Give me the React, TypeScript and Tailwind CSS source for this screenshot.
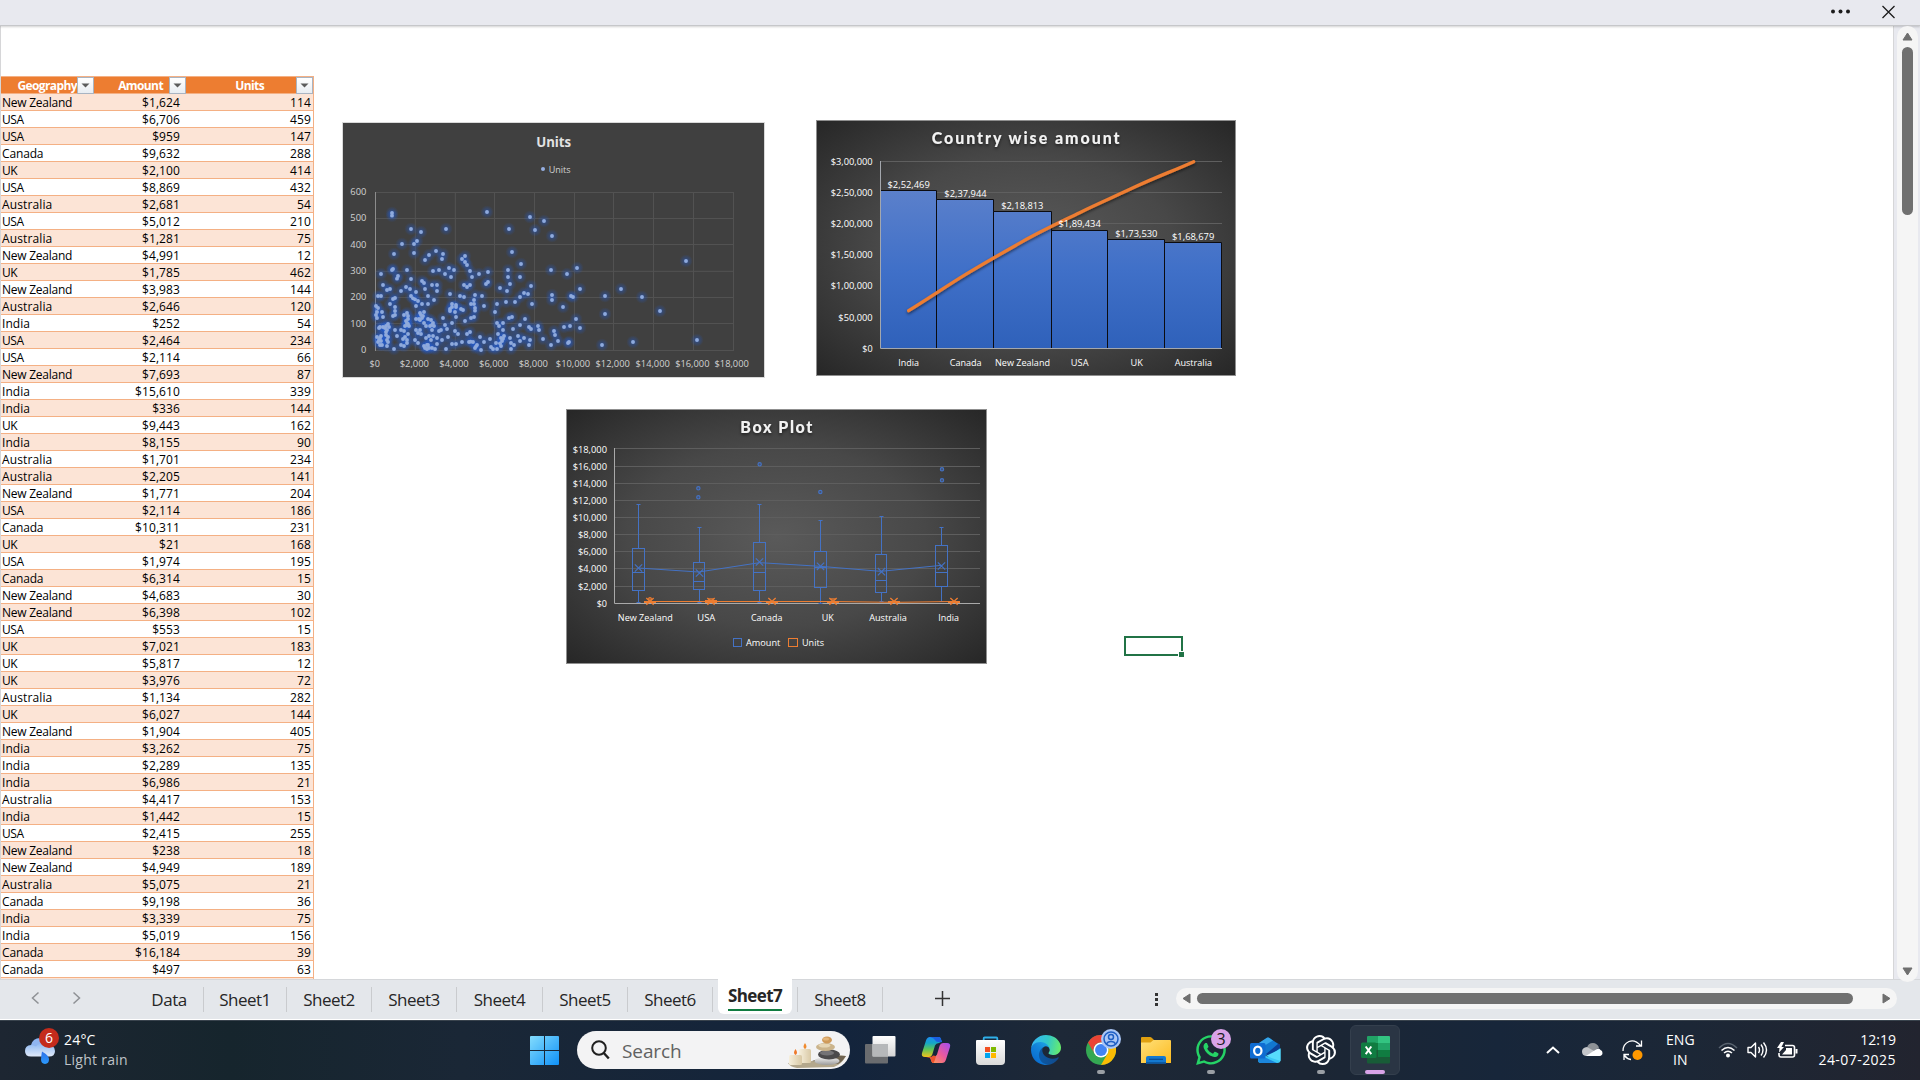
import React from "react";
import { SiOpenai } from "react-icons/si";
import { FaWhatsapp } from "react-icons/fa";

const ROWS: [string, string, number][] = [
  ["New Zealand", "$1,624", 114], ["USA", "$6,706", 459], ["USA", "$959", 147], ["Canada", "$9,632", 288],
  ["UK", "$2,100", 414], ["USA", "$8,869", 432], ["Australia", "$2,681", 54], ["USA", "$5,012", 210],
  ["Australia", "$1,281", 75], ["New Zealand", "$4,991", 12], ["UK", "$1,785", 462], ["New Zealand", "$3,983", 144],
  ["Australia", "$2,646", 120], ["India", "$252", 54], ["USA", "$2,464", 234], ["USA", "$2,114", 66],
  ["New Zealand", "$7,693", 87], ["India", "$15,610", 339], ["India", "$336", 144], ["UK", "$9,443", 162],
  ["India", "$8,155", 90], ["Australia", "$1,701", 234], ["Australia", "$2,205", 141], ["New Zealand", "$1,771", 204],
  ["USA", "$2,114", 186], ["Canada", "$10,311", 231], ["UK", "$21", 168], ["USA", "$1,974", 195],
  ["Canada", "$6,314", 15], ["New Zealand", "$4,683", 30], ["New Zealand", "$6,398", 102], ["USA", "$553", 15],
  ["UK", "$7,021", 183], ["UK", "$5,817", 12], ["UK", "$3,976", 72], ["Australia", "$1,134", 282],
  ["UK", "$6,027", 144], ["New Zealand", "$1,904", 405], ["India", "$3,262", 75], ["India", "$2,289", 135],
  ["India", "$6,986", 21], ["Australia", "$4,417", 153], ["India", "$1,442", 15], ["USA", "$2,415", 255],
  ["New Zealand", "$238", 18], ["New Zealand", "$4,949", 189], ["Australia", "$5,075", 21], ["Canada", "$9,198", 36],
  ["India", "$3,339", 75], ["India", "$5,019", 156], ["Canada", "$16,184", 39], ["Canada", "$497", 63],
];

const TRACKING: Record<string, string> = {
  "New Zealand": "tracking-[-0.25px]",
  Australia: "tracking-[0.12px]",
  India: "tracking-[0.05px]",
  Canada: "tracking-[-0.15px]",
  USA: "tracking-[-0.45px]",
  UK: "tracking-[-0.4px]",
};

// Scatter markers, three drawing units per pixel.
const POINTS: number[][] = [
  [66,69],[66,77],[351,66],[480,81],[522,93],[495,120],[546,138],[417,117],[228,117],[123,117],[153,126],[141,153],[132,162],[96,162],[132,189],[72,192],
  [177,195],[198,183],[219,192],[216,207],[165,210],[285,198],[276,207],[285,216],[291,225],[300,243],[237,234],[252,240],[225,252],[243,261],[189,243],
  [207,240],[111,240],[66,240],[69,237],[33,252],[84,258],[81,266],[123,267],[156,273],[162,279],[39,285],[51,300],[60,297],[108,291],[120,297],[93,303],
  [138,306],[165,297],[186,285],[201,285],[201,303],[240,312],[282,285],[291,291],[300,285],[306,261],[327,252],[354,246],[354,276],[348,282],[426,186],
  [453,222],[414,240],[414,261],[450,261],[420,282],[390,294],[411,303],[483,288],[543,240],[591,252],[621,234],[630,297],[462,309],[474,312],[450,321],
  [435,336],[408,336],[486,342],[546,315],[546,330],[603,318],[609,321],[579,351],[381,342],[375,366],[342,348],[336,318],[270,318],[282,321],[315,315],
  [312,330],[312,342],[303,342],[192,330],[174,318],[174,342],[156,342],[138,348],[144,333],[123,318],[129,325],[135,328],[60,342],[75,324],[69,327],
  [75,351],[75,363],[24,318],[33,318],[18,348],[24,354],[21,366],[36,366],[18,375],[39,381],[21,384],[75,375],[69,378],[246,342],[258,345],[258,351],
  [246,351],[240,357],[240,363],[255,366],[273,357],[279,360],[315,354],[315,362],[312,381],[303,384],[285,393],[258,381],[219,384],[246,399],[225,405],
  [417,384],[426,381],[465,387],[618,387],[630,414],[600,408],[582,411],[504,408],[507,420],[477,411],[483,417],[450,405],[429,417],[381,399],[399,399],
  [387,408],[399,420],[552,423],[555,435],[564,453],[597,456],[594,459],[543,465],[519,447],[480,450],[477,465],[462,444],[444,438],[450,453],[420,444],
  [423,459],[432,465],[423,477],[384,432],[402,438],[393,444],[399,446],[396,453],[378,459],[393,468],[363,471],[369,477],[381,477],[390,460],[333,480],[321,465],[315,474],
  [309,456],[302,455],[297,456],[318,469],[291,432],[300,426],[330,441],[342,456],[360,447],[276,456],[264,432],[255,423],[258,462],[246,462],[234,441],[216,450],
  [228,477],[201,462],[201,444],[189,438],[207,423],[213,420],[231,417],[30,411],[39,411],[48,408],[54,402],[57,411],[45,414],[51,420],[48,426],[27,414],
  [75,420],[93,420],[102,423],[105,408],[111,399],[117,408],[111,369],[102,375],[114,378],[114,387],[108,393],[114,402],[111,405],[81,438],[114,432],
  [105,441],[111,450],[111,459],[102,468],[93,465],[99,447],[21,441],[30,444],[33,438],[27,450],[24,456],[48,435],[54,441],[51,450],[54,456],[30,465],
  [36,465],[51,468],[72,477],[33,453],[150,369],[153,375],[162,366],[138,387],[147,387],[156,384],[150,390],[159,378],[162,399],[168,408],[174,387],
  [183,390],[189,399],[186,405],[192,408],[180,408],[138,420],[150,420],[144,429],[153,432],[135,450],[144,459],[168,444],[177,438],[183,450],[186,420],
  [162,468],[171,465],[165,474],[177,474],[186,474],[195,477],[171,477],[174,465],[948,213],[753,297],[705,318],[816,321],[870,363],[705,372],[696,465],
  [789,456],[981,450],
];

function Label({ x, y, w, children, fill = "#ffffff", size = 29.5, anchor = "middle" }: {
  x: number; y: number; w: number; children: string; fill?: string; size?: number; anchor?: "start" | "middle" | "end";
}) {
  return (
    <text x={x} y={y} textAnchor={anchor} textLength={w} lengthAdjust="spacingAndGlyphs" fontSize={size} fill={fill} fontFamily="'Open Sans', sans-serif">
      {children}
    </text>
  );
}

function ScatterChart() {
  const xs = ["$0", "$2,000", "$4,000", "$6,000", "$8,000", "$10,000", "$12,000", "$14,000", "$16,000", "$18,000"];
  const xc = [104, 223, 342, 461, 580, 699, 818, 938, 1057, 1175];
  const vx = [226, 346, 463.5, 583.5, 703.5, 820.5, 940.5, 1060.5, 1180.5];
  const hy = [232.5, 310.5, 388.5, 469, 547.5, 625.5];
  return (
    <svg viewBox="6 21 1269 768" className="block h-full w-full">
      <defs>
        <radialGradient id="glow">
          <stop offset="0" stopColor="#1f5fe0" stopOpacity=".6" />
          <stop offset=".4" stopColor="#1f5fe0" stopOpacity=".3" />
          <stop offset="1" stopColor="#1f5fe0" stopOpacity="0" />
        </radialGradient>
      </defs>
      <rect x="6" y="21" width="1269" height="768" fill="#d9d9d9" />
      <rect x="9" y="24" width="1263" height="762" fill="#404040" />
      <g stroke="#525252" strokeWidth="3">
        {hy.map((y) => <line key={y} x1="105" x2="1182" y1={y} y2={y} />)}
        <line x1="105" x2="1182" y1="706.5" y2="706.5" />
        {vx.map((x) => <line key={x} x1={x} x2={x} y1="231" y2="708" />)}
        <line x1="106.5" x2="106.5" y1="231" y2="708" stroke="#8c8c8c" />
      </g>
      <g transform="translate(90 225)">
        {POINTS.map(([x, y], i) => <circle key={i} cx={x} cy={y} r="20" fill="url(#glow)" />)}
        {POINTS.map(([x, y], i) => <circle key={i} cx={x} cy={y} r="5.8" fill="#8faadc" />)}
      </g>
      <text x="641" y="96" textAnchor="middle" textLength="105" lengthAdjust="spacingAndGlyphs" fontSize="42" fontWeight="700" fill="#e2e2e2" fontFamily="'Open Sans', sans-serif">Units</text>
      <circle cx="609" cy="162" r="6" fill="#96afe2" />
      <Label x={626} y={173} w={66} anchor="start" fill="#d2d2d2">Units</Label>
      {["600", "500", "400", "300", "200", "100"].map((t, i) => (
        <Label key={t} x={79} y={240 + i * 79} w={48} anchor="end" fill="#d2d2d2">{t}</Label>
      ))}
      <Label x={79} y={714} w={16} anchor="end" fill="#d2d2d2">0</Label>
      {xs.map((t, i) => (
        <Label key={t} x={xc[i]} y={755} w={i === 0 ? 31 : i < 5 ? 88 : 103} fill="#d2d2d2">{t}</Label>
      ))}
    </svg>
  );
}

function DarkFrame({ id, w, h }: { id: string; w: number; h: number }) {
  return (
    <>
      <defs>
        <radialGradient id={id} cx=".5" cy=".5" r=".71">
          <stop offset="0" stopColor="#5a5a5a" />
          <stop offset=".5" stopColor="#484848" />
          <stop offset="1" stopColor="#262626" />
        </radialGradient>
        <filter id={id + "-shadow"} x="-10%" y="-10%" width="120%" height="140%">
          <feDropShadow dx="0" dy="5" stdDeviation="4" floodColor="#000" floodOpacity=".55" />
        </filter>
      </defs>
      <rect x="1.5" y="1.5" width={w - 3} height={h - 3} fill={`url(#${id})`} stroke="#8f8f8f" strokeWidth="3" />
    </>
  );
}

function ParetoChart() {
  const edges = [211.5, 379.5, 550.5, 724.5, 892.5, 1063.5, 1234.5];
  const tops = [226.5, 253.5, 289.5, 346.5, 373.5, 382.5];
  const cats: [string, number, number][] = [["India", 296, 62], ["Canada", 467, 96], ["New Zealand", 637.5, 165], ["USA", 809, 53], ["UK", 980, 37], ["Australia", 1150, 112]];
  const vals: [string, number, number][] = [["$2,52,469", 296, 219], ["$2,37,944", 466.5, 246], ["$2,18,813", 637, 282], ["$1,89,434", 809, 336], ["$1,73,530", 979, 366], ["$1,68,679", 1149.5, 375]];
  const axis: [string, number, number][] = [["$3,00,000", 150, 126], ["$2,50,000", 243, 126], ["$2,00,000", 336, 126], ["$1,50,000", 429, 126], ["$1,00,000", 522, 126], ["$50,000", 618, 103], ["$0", 711, 31]];
  return (
    <svg viewBox="18 15 1260 768" className="block h-full w-full">
      <g transform="translate(18 15)"><DarkFrame id="pareto" w={1260} h={768} /></g>
      <defs>
        <linearGradient id="bar" x1="0" x2="0" y1="226" y2="700" gradientUnits="userSpaceOnUse">
          <stop offset="0" stopColor="#5b80cb" />
          <stop offset=".5" stopColor="#4070c8" />
          <stop offset="1" stopColor="#2f61ba" />
        </linearGradient>
      </defs>
      {[139.5, 232.5, 325.5].map((y) => <line key={y} x1="212" x2="1236" y1={y} y2={y} stroke="#5f5f5f" strokeWidth="3" />)}
      {tops.map((t, i) => (
        <path key={t} d={`M${edges[i]} 700V${t}H${edges[i + 1]}V700`} fill="url(#bar)" stroke="#0c0c10" strokeWidth="3" />
      ))}
      <path d="M211.5 138V700.5H1236" fill="none" stroke="#a3a7ad" strokeWidth="3" />
      <path d="M296 587C352 553 410 513 466 479S580 412 637 380S752 321 809 293S922 241 979 214S1094 166 1151 140" fill="none" stroke="#ed7d31" strokeWidth="10" strokeLinecap="round" filter="url(#pareto-shadow)" />
      <text x="647" y="88" textAnchor="middle" textLength="564" fontSize="48" fontWeight="900" fill="#f2f2f2" fontFamily="Lato, sans-serif" filter="url(#pareto-shadow)">Country wise amount</text>
      {axis.map(([t, y, w]) => <Label key={t} x={188} y={y} w={w} anchor="end">{t}</Label>)}
      {vals.map(([t, x, y]) => <Label key={t} x={x} y={y} w={127}>{t}</Label>)}
      {cats.map(([t, x, w]) => <Label key={t} x={x} y={753} w={w}>{t}</Label>)}
    </svg>
  );
}

// left, right, q3, q1, median, top whisker, bottom whisker, mean
const BOXES = [
  [217.5, 253.5, 430.5, 556.5, 502.5, 298.5, 592.5, 489],
  [400.5, 433.5, 472.5, 553.5, 529.5, 367.5, 592.5, 504],
  [580.5, 616.5, 412.5, 556.5, 502.5, 298.5, 592.5, 471],
  [763.5, 799.5, 439.5, 547.5, 487.5, 346.5, 595.5, 484],
  [946.5, 979.5, 448.5, 562.5, 526.5, 334.5, 589.5, 500],
  [1126.5, 1162.5, 421.5, 544.5, 502.5, 367.5, 589.5, 483],
];

function BoxPlotChart() {
  const hy = [130.5, 184.5, 235.5, 286.5, 337.5, 388.5, 439.5, 490.5, 544.5];
  const labels = ["$18,000", "$16,000", "$14,000", "$12,000", "$10,000", "$8,000", "$6,000", "$4,000", "$2,000", "$0"];
  const ly = [143, 194, 245, 296, 347, 398, 449, 502, 554, 605];
  const cats: [string, number, number][] = [["New Zealand", 256, 165], ["USA", 439, 54], ["Canada", 620, 94], ["UK", 803, 36], ["Australia", 984, 113], ["India", 1166, 62]];
  const outliers = [[415, 250], [415, 277], [599, 178], [781, 261], [1146, 193], [1146, 226]];
  return (
    <svg viewBox="18 12 1263 765" className="block h-full w-full">
      <g transform="translate(18 12)"><DarkFrame id="box" w={1263} h={765} /></g>
      {hy.map((y) => <line key={y} x1="165" x2="1260" y1={y} y2={y} stroke="#5e5e5e" strokeWidth="3" />)}
      <path d="M163.5 129V595.5H1260" fill="none" stroke="#a9a9a9" strokeWidth="3" />
      <g stroke="#4472c4" strokeWidth="3" fill="none">
        {BOXES.map(([l, r, q3, q1, med, hi, lo, mean]) => {
          const c = Math.floor((l + r) / 6) * 3 + 1.5;
          return (
            <g key={l}>
              <path d={`M${c} ${q3}V${hi}M${c - 6} ${hi}H${c + 6}M${c} ${q1}V${lo}M${c - 6} ${lo}H${c + 6}`} />
              <rect x={l} y={q3} width={r - l} height={q1 - q3} />
              <path d={`M${l} ${med}H${r}`} />
              <path d={`M${c - 11} ${mean - 11}l22 22m0 -22l-22 22`} strokeWidth="3.5" />
            </g>
          );
        })}
        <path d="M235 489L416 501L599 473L781 484L962 499L1145 481" strokeWidth="3" />
        {outliers.map(([x, y]) => <circle key={y} cx={x} cy={y} r="5" fill="#46536f" strokeWidth="3.4" />)}
      </g>
      <g stroke="#ed7d31" strokeWidth="4" fill="none">
        <path d="M270 589.5H819L1002 592L1182 589.5" strokeWidth="3" />
        {[270, 453, 636, 819, 1002, 1182].map((x, i) => (
          <g key={x}>
            <rect x={x - 18} y={i === 1 ? 585 : 588} width="36" height={i === 1 ? 9 : 6} fill="#ed7d31" stroke="none" />
            <path d={`M${x - 11} 579l22 20m0 -20l-22 20`} />
            {i === 0 && <circle cx={x} cy="582" r="4" />}
            {(i === 1 || i === 3) && <path d={`M${x - 8} 582h16`} />}
          </g>
        ))}
      </g>
      <text x="649" y="84" textAnchor="middle" textLength="216" fontSize="48" fontWeight="900" fill="#f2f2f2" fontFamily="Lato, sans-serif" filter="url(#box-shadow)">Box Plot</text>
      {labels.map((t, i) => <Label key={t} x={141} y={ly[i]} w={i < 5 ? 103 : i < 9 ? 87 : 31} anchor="end">{t}</Label>)}
      {cats.map(([t, x, w]) => <Label key={t} x={x} y={648} w={w}>{t}</Label>)}
      <rect x="520.5" y="700.5" width="24" height="24" fill="none" stroke="#4472c4" strokeWidth="3" />
      <Label x={558} y={723} w={103} anchor="start">Amount</Label>
      <rect x="685.5" y="700.5" width="27" height="24" fill="none" stroke="#ed7d31" strokeWidth="3" />
      <Label x={726} y={723} w={66} anchor="start">Units</Label>
    </svg>
  );
}

function FilterButton() {
  return (
    <span className="flex h-[17px] w-[17px] shrink-0 items-center justify-center border border-[#a9b4c2] bg-gradient-to-b from-white to-[#e9edf2]">
      <svg width="9" height="5" viewBox="0 0 9 5"><path d="M.5.5h8l-4 4z" fill="#5c5c5c" /></svg>
    </span>
  );
}

function DataTable() {
  return (
    <div className="mt-[50px] w-[313px] shrink-0 border-r border-[#f4b084] text-[12px] leading-[16px] text-black">
      <div className="grid h-[18px] grid-cols-[93px_92px_127px] border-y border-[#f4b084] bg-[#ed7d31] font-bold text-white">
        <div className="-my-px flex items-center justify-end"><span className="pt-[2px] tracking-[-0.6px]">Geography</span><FilterButton /></div>
        <div className="-my-px flex items-center justify-end"><span className="mr-[6px] pt-[2px] tracking-[-0.6px]">Amount</span><FilterButton /></div>
        <div className="-my-px flex items-center justify-end"><span className="mr-8 pt-[2px] tracking-[-0.6px]">Units</span><FilterButton /></div>
      </div>
      {ROWS.map(([g, a, u], i) => (
        <div key={i} className={`grid h-[17px] grid-cols-[93px_86px_131px] border-b border-[#f4b084] pt-px ${i % 2 ? "bg-white" : "bg-[#fce4d6]"}`}>
          <span className={`pl-px ${TRACKING[g]}`}>{g}</span>
          <span className="text-right tracking-[0.1px]">{a}</span>
          <span className="text-right tracking-[0.1px]">{u}</span>
        </div>
      ))}
      <div className="h-4 bg-[#fce4d6]" />
    </div>
  );
}

const TABS = [
  ["Data", "w-[69px]"], ["Sheet1", "w-[83px]"], ["Sheet2", "w-[85px]"], ["Sheet3", "w-[85px]"], ["Sheet4", "w-[86px]"], ["Sheet5", "w-[85px]"], ["Sheet6", "w-[85px]"],
];

function SheetTab({ name, width }: { name: string; width: string }) {
  return (
    <div className={`flex h-[25px] items-center justify-center border-r border-[#c9cbce] ${width}`}>
      <span className="text-[17px] leading-6 tracking-[-0.5px]">{name}</span>
    </div>
  );
}

function TabBar() {
  return (
    <div className="flex h-[41px] items-start border-b border-white bg-[#e4e7eb] font-['Open_Sans',sans-serif] text-[#262626] shadow-[inset_0_1px_0_#d5d7da]">
      <div className="flex h-[38px] w-[135px] items-center pl-[31px]">
        <svg width="9" height="14" viewBox="0 0 9 14" fill="none" stroke="#8e9195" strokeWidth="1.5"><path d="M7.5 1.5L1.5 7l6 5.5" /></svg>
        <svg className="ml-8" width="9" height="14" viewBox="0 0 9 14" fill="none" stroke="#8e9195" strokeWidth="1.5"><path d="M1.5 1.5L7.5 7l-6 5.5" /></svg>
      </div>
      <div className="flex pt-[8px]">
        {TABS.map(([n, w]) => <SheetTab key={n} name={n} width={w} />)}
      </div>
      <div className="ml-[5px] flex h-[35px] w-[74px] flex-col items-center rounded-b-md bg-white pt-[4px]">
        <span className="w-[54px] whitespace-nowrap text-[17px] font-bold leading-[26px] tracking-[-0.62px]">Sheet7</span>
        <div className="h-[2px] w-[54px] bg-[#107c41]" />
      </div>
      <div className="ml-[5px] flex pt-[8px]">
        <div className="h-[25px] border-l border-[#c9cbce]" />
        <SheetTab name="Sheet8" width="w-[85px]" />
      </div>
      <svg className="ml-[52px] mt-[12px]" width="15" height="15" viewBox="0 0 15 15" stroke="#333" strokeWidth="1.5"><path d="M7.5 0v15M0 7.5h15" /></svg>
      <div className="ml-auto mr-[18px] flex flex-col gap-[2px] pt-[14px]">
        <i className="h-[3px] w-[3px] bg-[#333]" /><i className="h-[3px] w-[3px] bg-[#333]" /><i className="h-[3px] w-[3px] bg-[#333]" />
      </div>
      <div className="mr-[23px] mt-[9px] flex h-[21px] w-[721px] items-center rounded-full bg-[#f5f5f5] pl-[6px] pr-[6px]">
        <svg width="9" height="11" viewBox="0 0 9 11"><path d="M8 1v9L1 5.5z" fill="#6f6f6f" stroke="#6f6f6f" strokeLinejoin="round" /></svg>
        <div className="ml-[6px] h-[11px] w-[656px] rounded-full bg-[#707070]" />
        <svg className="ml-auto" width="9" height="11" viewBox="0 0 9 11"><path d="M1 1v9l7-4.5z" fill="#6f6f6f" stroke="#6f6f6f" strokeLinejoin="round" /></svg>
      </div>
    </div>
  );
}

function Cell({ children, dot }: { children: React.ReactNode; dot?: boolean }) {
  return (
    <div className="relative flex h-full w-[55px] items-center justify-center">
      {children}
      {dot && <span className="absolute bottom-[6px] left-[23.5px] h-[4px] w-[8px] rounded-full bg-[#9a9fa5]" />}
    </div>
  );
}

function SearchArt() {
  return (
    <svg width="58" height="32" viewBox="0 0 58 32">
      <defs>
        <linearGradient id="wax" x1="0" x2="1"><stop stopColor="#f6efdc" /><stop offset="1" stopColor="#d9c9a6" /></linearGradient>
        <linearGradient id="stone" x1="0" y1="0" x2="0" y2="1"><stop stopColor="#f3f3f3" /><stop offset="1" stopColor="#9b9b9b" /></linearGradient>
      </defs>
      <path d="M0 27q12-2 25-2q18-8 33-5q-4 8-12 11l-37 1q-7-1-9-5z" fill="#b3a78c" />
      <path d="M24 25q18-6 34-5q-3 5-8 8z" fill="#6f6350" />
      <rect x="11" y="13" width="12" height="14" rx="1.5" fill="url(#wax)" />
      <rect x="1" y="19" width="13" height="10" rx="1.5" fill="url(#wax)" />
      <path d="M17 7q3 4 0 6q-3-2 0-6z" fill="#f08a2e" /><path d="M7.5 13q3 4 0 6q-3-2 0-6z" fill="#ef7a2a" />
      <ellipse cx="39" cy="25" rx="12.5" ry="4" fill="url(#stone)" />
      <ellipse cx="41" cy="18.5" rx="11" ry="5" fill="#4b4a4c" /><ellipse cx="39" cy="17" rx="7" ry="2.5" fill="#747376" />
      <ellipse cx="37.5" cy="11" rx="9.5" ry="4" fill="#cbb48c" /><ellipse cx="36.5" cy="9.5" rx="6" ry="2" fill="#e6d6b5" />
      <ellipse cx="39" cy="4" rx="5" ry="3.5" fill="#cf9a5a" /><ellipse cx="38" cy="3" rx="3" ry="1.5" fill="#e4b67b" />
    </svg>
  );
}

function CopilotIcon() {
  return (
    <svg width="30" height="28" viewBox="0 0 30 28">
      <defs>
        <linearGradient id="cpA" x1="0" y1="0" x2="0" y2="1"><stop stopColor="#1f8df0" /><stop offset=".3" stopColor="#14a5c8" /><stop offset=".6" stopColor="#59c45a" /><stop offset="1" stopColor="#f2c21b" /></linearGradient>
        <linearGradient id="cpB" x1="1" y1="0" x2="0" y2="1"><stop stopColor="#a04df5" /><stop offset=".5" stopColor="#ec5a9c" /><stop offset="1" stopColor="#ffa24d" /></linearGradient>
      </defs>
      <path d="M18 7q1.5-1 3-1l-1.5-4Q19 1 17.500 1H9Q6 1 5 4.500L1 17q-1 4 3 4h4q2.500 0 3.300-2.500L14 9.500Q15 7 18 7z" fill="url(#cpA)" />
      <path d="M12 20.500q-1.500 1-3 1l1.500 4Q11 27 12.500 27H21q3 0 4-3.500L29 11q1-4-3-4h-4q-2.500 0-3.300 2.500L16 18.500q-1 2.500-4 2z" fill="url(#cpB)" />
      <path d="M9 1h8.500q1.500 0 2 1L21 6h-4q-2 0-3-2t-5-3z" fill="#1b5fe0" />
      <path d="M5 21h4q2 0 3-1.500l3 .5q-1 5-2.500 7Q11 27 10.500 25.500L9.500 22z" fill="#f0532d" />
    </svg>
  );
}

function StoreIcon() {
  return (
    <svg width="29" height="29" viewBox="0 0 29 29">
      <defs><linearGradient id="bag" x1="0" x2="0" y1="0" y2="1"><stop stopColor="#fff" /><stop offset="1" stopColor="#dadada" /></linearGradient></defs>
      <path d="M7.700 6V2.500q0-1 1-1h11.600q1 0 1 1V6" fill="none" stroke="#2fb0ea" strokeWidth="1.8" />
      <path d="M0 5q0-1 1-1h27q1 0 1 1v20q0 4-4 4H4q-4 0-4-4z" fill="url(#bag)" />
      <path d="M9 11h5v5H9z" fill="#f25022" /><path d="M15 11h5v5h-5z" fill="#7fba00" /><path d="M9 17h5v5H9z" fill="#00a4ef" /><path d="M15 17h5v5h-5z" fill="#ffb900" />
    </svg>
  );
}

function EdgeIcon() {
  return (
    <svg width="30" height="30" viewBox="0 0 256 256">
      <defs>
        <linearGradient id="e1" x1="60" y1="178" x2="240" y2="178" gradientUnits="userSpaceOnUse"><stop stopColor="#0c59a4" /><stop offset="1" stopColor="#114a8b" /></linearGradient>
        <linearGradient id="e2" x1="150" y1="100" x2="45" y2="225" gradientUnits="userSpaceOnUse"><stop stopColor="#1b9de2" /><stop offset=".4" stopColor="#1383d9" /><stop offset="1" stopColor="#0a6fd0" /></linearGradient>
        <linearGradient id="e3" x1="20" y1="60" x2="250" y2="110" gradientUnits="userSpaceOnUse"><stop stopColor="#35b8f0" /><stop offset=".5" stopColor="#32c8c8" /><stop offset="1" stopColor="#66eb6e" /></linearGradient>
      </defs>
      <path d="M231 190.500a93.700 93.700 0 0 1-10.500 4.700 101.900 101.900 0 0 1-35.900 6.400c-47.300 0-88.500-32.500-88.500-74.300a31.500 31.500 0 0 1 16.400-27.300c-42.800 1.800-53.800 46.400-53.800 72.500 0 73.900 68.100 81.400 82.800 81.400 7.900 0 19.800-2.300 27-4.600l1.300-.4a128.300 128.300 0 0 0 66.600-52.800 4 4 0 0 0-5.400-5.600z" fill="url(#e1)" />
      <path d="M105.700 241.400a79.200 79.200 0 0 1-22.700-21.300 80.700 80.700 0 0 1 29.500-120c3.200-1.500 8.500-4.100 15.600-4a32.400 32.400 0 0 1 25.700 13 31.900 31.900 0 0 1 6.300 18.700c0-.2 24.500-79.600-80-79.600-43.900 0-80 41.700-80 78.200a130.200 130.200 0 0 0 12.100 56 128 128 0 0 0 156.400 67 75.500 75.500 0 0 1-62.800-8z" fill="url(#e2)" />
      <path d="M152.300 148.900c-.8 1-3.300 2.500-3.300 5.700 0 2.600 1.700 5.100 4.700 7.200 14.400 10 41.500 8.700 41.600 8.700 10.700 0 21.100-2.900 30.300-8.300A61.400 61.400 0 0 0 256 109.200c.3-22.400-8-37.300-11.300-43.900C223.500 23.900 177.700 0 128 0A128 128 0 0 0 0 126.200c.5-36.500 36.800-66 80-66 3.500 0 23.500.3 42 10a72.600 72.600 0 0 1 30.900 29.300c6.100 10.600 7.200 24.100 7.200 29.500s-2.700 13.300-7.800 19.900z" fill="url(#e3)" />
    </svg>
  );
}

function ChromeIcon() {
  return (
    <svg width="30" height="30" viewBox="0 0 48 48">
      <circle cx="24" cy="24" r="24" fill="#34a853" />
      <path d="M3.200 12A24 24 0 0 1 44.800 12H24a12 12 0 0 0-10.400 18z" fill="#ea4335" />
      <path d="M44.800 12A24 24 0 0 1 24 48l10.400-18A12 12 0 0 0 24 12z" fill="#fbbc04" />
      <circle cx="24" cy="24" r="12" fill="#fff" /><circle cx="24" cy="24" r="9.5" fill="#4285f4" />
    </svg>
  );
}

function FolderIcon() {
  return (
    <svg width="30" height="27" viewBox="0 0 30 27">
      <defs><linearGradient id="fold" x1="0" y1="0" x2="1" y2="1"><stop stopColor="#ffe07a" /><stop offset="1" stopColor="#fdbb1f" /></linearGradient></defs>
      <path d="M0 1q0-1 1-1h8q1 0 2 1l2 2v5H0z" fill="#e0a010" />
      <path d="M0 5.500h9.500L12.500 3H29q1 0 1 1v22H0z" fill="url(#fold)" />
      <path d="M5 21q0-2 2-2h16q2 0 2 2v5.500H5z" fill="#1479d0" />
      <path d="M5 26.500V25h20v1.500z" fill="#0b5aa6" /><path d="M8 22.300h14" stroke="#0a4c92" strokeWidth="1.2" />
    </svg>
  );
}

function OutlookIcon() {
  return (
    <svg width="31" height="27" viewBox="0 0 31 27">
      <path d="M6 8L17 .8Q18 .2 19 .8L30 8v3L18 19 6 14z" fill="#1277cf" />
      <path d="M6 8L17 .8q1-.6 2 0l4 2.600L9 12z" fill="#35a6ea" />
      <path d="M16 17L28.500 6.500 30 8v4L19 19z" fill="#0c3f96" />
      <path d="M8 14l10 6 12.500-9v12q0 3-3 3H11q-3 0-3-3z" fill="#3bc8f5" />
      <path d="M30.500 12v12L16 19z" fill="#57dcfc" /><path d="M8 17l19 9H11q-3 0-3-3z" fill="#1b86dc" />
      <rect x="0" y="6" width="15.5" height="15.5" rx="1.5" fill="#0f6cd2" />
      <ellipse cx="7.8" cy="13.8" rx="3.7" ry="4.2" fill="none" stroke="#fff" strokeWidth="2.2" />
    </svg>
  );
}

function ExcelIcon() {
  return (
    <svg width="30" height="28" viewBox="0 0 30 28">
      <path d="M7 1q0-1 1-1h11v9H7z" fill="#21a366" /><path d="M18 0h11q1 0 1 1v7H18z" fill="#33c481" />
      <path d="M7 7h11v7H7z" fill="#107c41" /><path d="M18 7h12v7H18z" fill="#21a366" />
      <path d="M7 14h11v7H7z" fill="#185c37" /><path d="M18 14h12v7H18z" fill="#107c41" />
      <path d="M7 21h23v5.500q0 1-1 1H8q-1 0-1-1z" fill="#185c37" />
      <rect x="1" y="6.5" width="15.5" height="15.5" rx="1.5" fill="#107c41" />
      <path d="M5.700 10.500l5.600 7.600M11.300 10.500l-5.600 7.600" stroke="#fff" strokeWidth="2" />
    </svg>
  );
}

function Taskbar() {
  return (
    <div className="flex h-[60px] bg-[linear-gradient(90deg,#1d2632_0%,#16252d_12%,#1a2736_24%,#13243c_44%,#1d2837_55%,#1c2634_68%,#17263a_78%,#1c2736_88%,#22242f_100%)] font-['Open_Sans',sans-serif] text-white shadow-[inset_0_1px_0_#39434d]">
      <div className="flex w-[517px] pl-[25px]">
        <div className="relative h-full w-[39px]">
          <svg className="mt-[16px]" width="31" height="29" viewBox="0 0 31 29">
            <defs>
              <linearGradient id="cl" x1="0" y1="0" x2="0" y2="1"><stop stopColor="#8db8f2" /><stop offset="1" stopColor="#dfe9f8" /></linearGradient>
              <linearGradient id="dr" x1="0" y1="0" x2="0" y2="1"><stop stopColor="#2c6fe8" /><stop offset="1" stopColor="#2b9bfd" /></linearGradient>
            </defs>
            <path d="M6 9Q8 2 15 2q9 0 9 9l-2 5H6z" fill="#8fb5f0" />
            <path d="M6 20.500q-6 0-6-5.500t6-6q3 0 5 1.500Q14 6.500 20 7q9 .5 10 8 0 5.500-6 5.500z" fill="url(#cl)" />
            <path d="M17 15.500q7 4 7 8t-4 4.500q-4-.5-4-4.500 0-3 1-8z" fill="url(#dr)" />
          </svg>
          <span className="absolute left-[14px] top-[8px] flex h-5 w-5 items-center justify-center rounded-full bg-[#c42b1c] text-[14px] leading-none">6</span>
        </div>
        <div className="pt-[10px] text-[14px] leading-5">
          <div className="tracking-[0.2px]">24°C</div>
          <div className="tracking-[0.25px] text-[#bfc3c8]">Light rain</div>
        </div>
      </div>
      <Cell>
        <svg width="29" height="29" viewBox="0 0 29 29">
          <defs><linearGradient id="win" x1="0" y1="0" x2="1" y2="1"><stop stopColor="#83dcfd" /><stop offset="1" stopColor="#0f91f8" /></linearGradient></defs>
          <path d="M1 0h13v14H0V1q0-1 1-1zM15 0h13q1 0 1 1v13H15zM0 15h14v14H1q-1 0-1-1zM15 15h14v13q0 1-1 1H15z" fill="url(#win)" />
        </svg>
      </Cell>
      <div className="ml-[5px] mr-[3px] mt-[11px] flex h-[38px] w-[273px] items-center rounded-full bg-[#f3f3f4] pl-[14px] pr-[4px]">
        <svg width="19" height="20" viewBox="0 0 19 20" fill="none" stroke="#1f1f1f" strokeWidth="2"><circle cx="8" cy="8" r="6.8" /><path d="M12.800 13l5 5.500" strokeWidth="2.4" /></svg>
        <span className="ml-[12px] pt-px text-[19px] leading-[26px] tracking-[-0.1px] text-[#616161]">Search</span>
        <div className="ml-auto mt-[4px]"><SearchArt /></div>
      </div>
      <Cell>
        <svg width="31" height="28" viewBox="0 0 31 28">
          <defs><linearGradient id="tv" x1="0" y1="0" x2="0" y2="1"><stop stopColor="#fff" /><stop offset="1" stopColor="#d4d4d4" /></linearGradient></defs>
          <rect x="0" y="8" width="23" height="19.5" rx="1" fill="#6a6c6f" /><rect x="7.5" y="0" width="23" height="20.5" rx="1" fill="url(#tv)" /><rect x="7.5" y="8" width="15.5" height="12.5" fill="#b6b8ba" />
        </svg>
      </Cell>
      <Cell><CopilotIcon /></Cell>
      <Cell><StoreIcon /></Cell>
      <Cell><EdgeIcon /></Cell>
      <Cell dot>
        <ChromeIcon />
        <svg className="absolute left-[28px] top-[9px]" width="20" height="20" viewBox="0 0 20 20"><circle cx="10" cy="10" r="10" fill="#aac6f5" /><g fill="none" stroke="#1f5fc4" strokeWidth="1.5"><circle cx="10" cy="10" r="7" /><circle cx="10" cy="8" r="2.5" /><path d="M5.500 15q1-2.500 4.500-2.500t4.500 2.500" /></g></svg>
      </Cell>
      <Cell><FolderIcon /></Cell>
      <Cell dot>
        <FaWhatsapp size={34} color="#25d366" />
        <span className="absolute left-[28px] top-[9px] flex h-5 w-5 items-center justify-center rounded-full bg-[#d8a3e8] text-[16px] leading-none text-[#1a1a1a]">3</span>
      </Cell>
      <Cell><OutlookIcon /></Cell>
      <Cell dot><SiOpenai size={30} color="#fff" /></Cell>
      <Cell>
        <div className="-ml-px flex h-[50px] w-[50px] items-center justify-center rounded-md border border-[#343f4d] bg-[#2a3544]"><ExcelIcon /></div>
        <span className="absolute bottom-[6px] left-[17px] h-[4px] w-[20px] rounded-full bg-[#d8a3e8]" />
      </Cell>
      <div className="ml-auto flex items-center pr-[24px]">
        <svg width="14" height="8" viewBox="0 0 14 8" fill="none" stroke="#fff" strokeWidth="2"><path d="M1 7l6-5.500L13 7" /></svg>
        <svg className="ml-[22px]" width="21" height="14" viewBox="0 0 21 14"><path d="M5 5q1-5 6-5 4 0 6 4.500l-6 4z" fill="#8e9297" /><path d="M4 13q-4-.5-4-4.500T5 4l9 5-6 4z" fill="#c4c6c9" /><path d="M4 13l9-6q4-3 5.500 0 2 .5 2 3t-3 3z" fill="#fff" /></svg>
        <svg className="ml-[19px]" width="22" height="22" viewBox="0 0 22 22" fill="none" stroke="#fff" strokeWidth="1.3"><path d="M1 12Q1 5 7 2.500T19 7M19.500 1.500V7H14M2 21v-5.500h5M2.500 16.500Q5 20 9 20.500" /><circle cx="15.5" cy="16" r="5" fill="#ff9800" stroke="none" /></svg>
        <div className="ml-[20px] w-[32px] text-center text-[14px] leading-5 tracking-[0.17px]">ENG<br />IN</div>
        <svg className="ml-[22px]" width="20" height="16" viewBox="0 0 20 16" fill="none" stroke="#fff" strokeWidth="1.5"><path d="M1 6q9-9 18 0" stroke="#59636f" /><path d="M3.500 8.500q6.500-6 13 0M6 11q4-3.500 8 0" /><circle cx="10" cy="13.5" r="2" fill="#fff" stroke="none" /></svg>
        <svg className="ml-[9px]" width="21" height="18" viewBox="0 0 21 18" fill="none" stroke="#fff" strokeWidth="1.4"><path d="M1 6.500h3L8.500 2v14L4 11.500H1z" strokeLinejoin="round" /><path d="M11.500 6q2 3 0 6M14 3.500q4 5.500 0 11M16.500 1.500q6 7.500 0 15" /></svg>
        <svg className="ml-[9px]" width="21" height="17" viewBox="0 0 21 17" fill="none" stroke="#fff" strokeWidth="1.6"><path d="M8 3.500h7.500q2 0 2 2v7.500q0 2-2 2H4q-2 0-2-2V11" /><path d="M19.500 7v4.500" strokeWidth="2" /><path d="M9 6h6v6.500H5L9 8z" fill="#fff" stroke="none" /><path d="M4 0l-4 6h2.500L2 10.500 7 5H4.500L7 0z" fill="#fff" stroke="none" /></svg>
        <div className="ml-[20px] text-right text-[14px] leading-5"><div>12:19</div><div className="tracking-[0.45px]">24-07-2025</div></div>
      </div>
    </div>
  );
}

export default function App() {
  return (
    <div className="flex h-[1080px] w-[1920px] flex-col overflow-hidden bg-[#e8e9ef]">
      <div className="relative z-10 flex h-[26px] items-start justify-end border-b border-[#c6c7ca] pr-[25px] pt-[5px] shadow-[0_1px_2px_rgba(0,0,0,0.18)]">
        <svg className="mr-[32px] mt-[4px]" width="19" height="5" viewBox="0 0 19 5" fill="#1c1c1c"><circle cx="2" cy="2.5" r="2" /><circle cx="9.5" cy="2.5" r="2" /><circle cx="17" cy="2.5" r="2" /></svg>
        <svg width="13" height="14" viewBox="0 0 13 14" stroke="#1c1c1c" strokeWidth="1.3"><path d="M.5 1l12 12M12.500 1l-12 12" /></svg>
      </div>
      <div className="flex h-[953px] shrink-0">
        <div className="relative flex h-[953px] w-[1894px] shrink-0 overflow-hidden border-x border-[#d6d6d8] bg-white font-['Open_Sans',sans-serif]">
          <DataTable />
          <div className="absolute left-[341px] top-[96px] h-[256px] w-[423px]"><ScatterChart /></div>
          <div className="absolute left-[815px] top-[94px] h-[256px] w-[420px]"><ParetoChart /></div>
          <div className="absolute left-[565px] top-[383px] h-[255px] w-[421px]"><BoxPlotChart /></div>
          <div className="absolute left-[1123px] top-[610px] h-[20px] w-[59px] border-2 border-[#217346]">
            <span className="absolute -bottom-[3px] -right-[3px] h-[6px] w-[6px] border-l border-t border-white bg-[#217346]" />
          </div>
        </div>
        <div className="relative z-10 ml-[3px] flex h-[956px] w-[21px] flex-col items-center rounded-full bg-[#f5f5f5] pt-[6px]">
          <svg width="11" height="9" viewBox="0 0 11 9"><path d="M1 8h9L5.500 1z" fill="#6f6f6f" stroke="#6f6f6f" strokeLinejoin="round" /></svg>
          <div className="mt-[6px] h-[168px] w-[11px] rounded-full bg-[#707070]" />
          <svg className="mb-[6px] mt-auto" width="11" height="9" viewBox="0 0 11 9"><path d="M1 1h9L5.500 8z" fill="#6f6f6f" stroke="#6f6f6f" strokeLinejoin="round" /></svg>
        </div>
      </div>
      <TabBar />
      <Taskbar />
    </div>
  );
}
